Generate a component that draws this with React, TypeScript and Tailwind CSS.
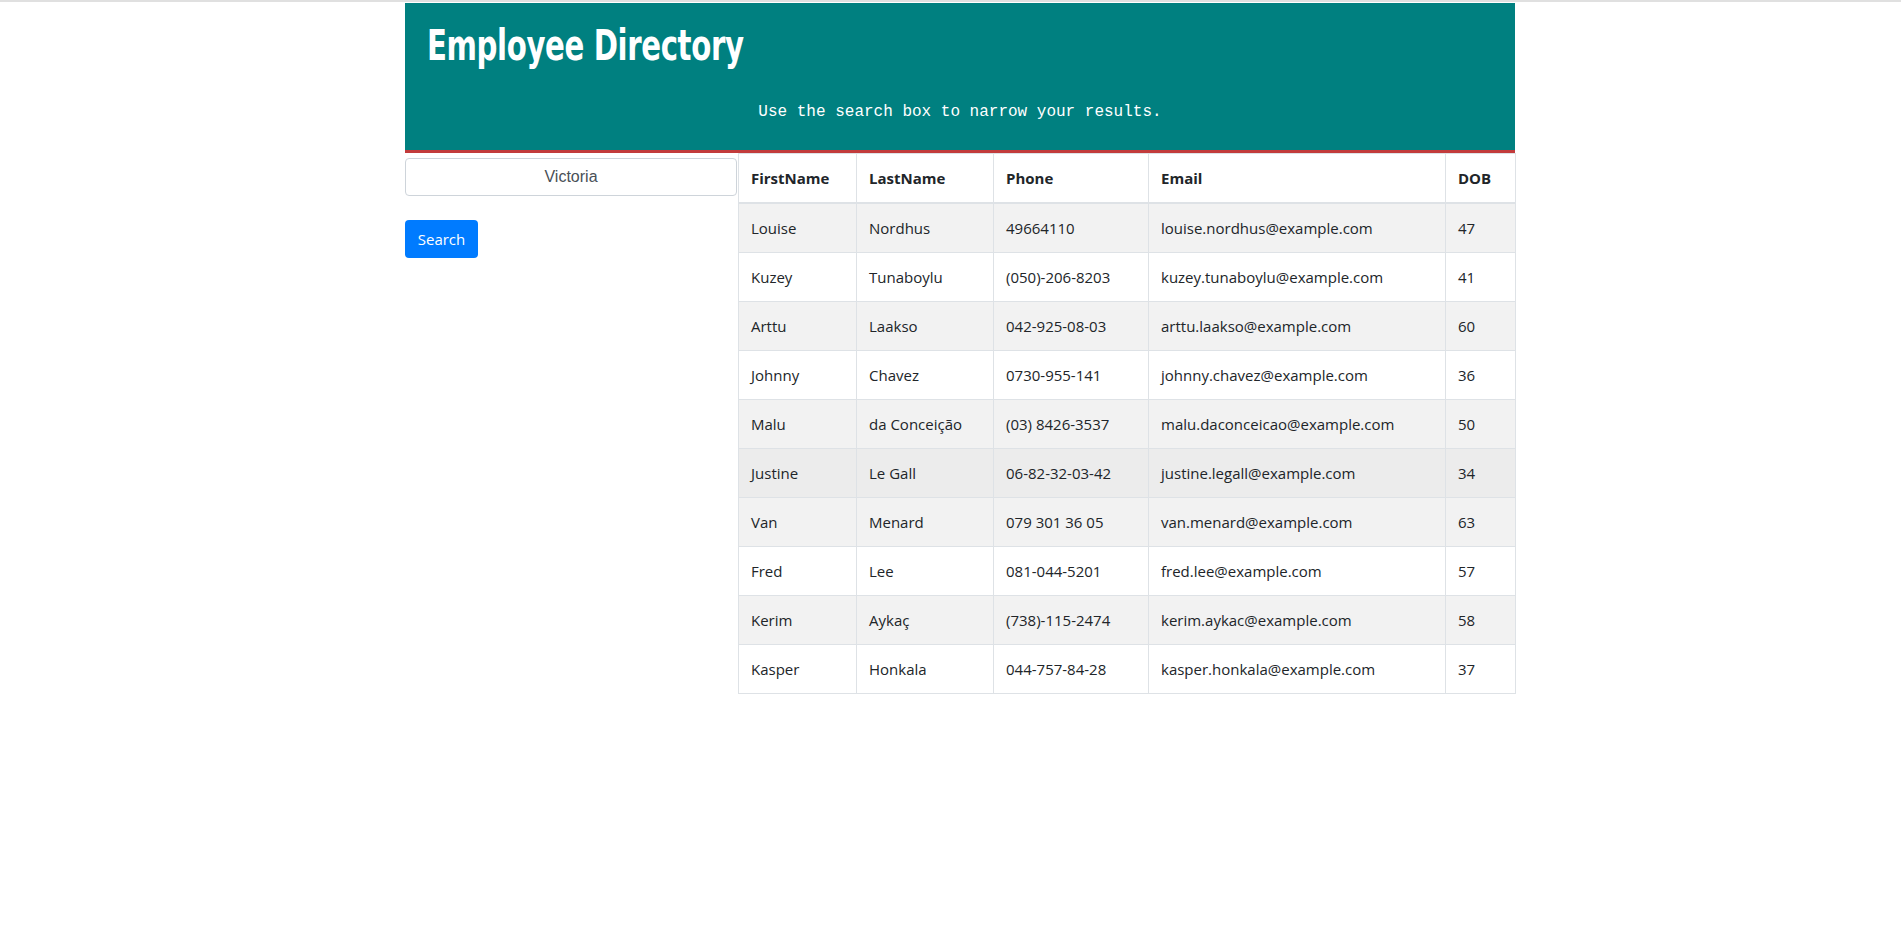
import React from "react";

const rows = [
  ["Louise", "Nordhus", "49664110", "louise.nordhus@example.com", "47"],
  ["Kuzey", "Tunaboylu", "(050)-206-8203", "kuzey.tunaboylu@example.com", "41"],
  ["Arttu", "Laakso", "042-925-08-03", "arttu.laakso@example.com", "60"],
  ["Johnny", "Chavez", "0730-955-141", "johnny.chavez@example.com", "36"],
  ["Malu", "da Conceição", "(03) 8426-3537", "malu.daconceicao@example.com", "50"],
  ["Justine", "Le Gall", "06-82-32-03-42", "justine.legall@example.com", "34"],
  ["Van", "Menard", "079 301 36 05", "van.menard@example.com", "63"],
  ["Fred", "Lee", "081-044-5201", "fred.lee@example.com", "57"],
  ["Kerim", "Aykaç", "(738)-115-2474", "kerim.aykac@example.com", "58"],
  ["Kasper", "Honkala", "044-757-84-28", "kasper.honkala@example.com", "37"],
];

const headers = ["FirstName", "LastName", "Phone", "Email", "DOB"];
const widths = ["w-[118px]", "w-[137px]", "w-[155px]", "w-[297px]", "w-[70px]"];

export default function App() {
  return (
    <div className="min-h-[929px] bg-white font-['Segoe_UI','Open_Sans',sans-serif] text-[#212529]">
      <div className="h-[2px] bg-[#e0e0e0]" />
      <div className="ml-[405px] mt-[1px] w-[1110px]">
        <header className="h-[150px] border-b-[3px] border-[#c23b3b] bg-[#008080] flex flex-col">
          <h1 className="origin-left scale-x-[0.755] pl-[29px] pt-[18px] text-[43px] leading-[48px] text-white font-['Impact','DejaVu_Sans_Condensed','DejaVu_Sans',sans-serif] font-bold tracking-[-0.5px] whitespace-nowrap">
            Employee Directory
          </h1>
          <p className="mt-[31px] text-center text-[16px] leading-[24px] text-white font-['Liberation_Mono','Courier_New',monospace]">
            Use the search box to narrow your results.
          </p>
        </header>
        <div className="flex">
          <div className="w-[333px] shrink-0 pt-[5px]">
            <input
              readOnly
              value="Victoria"
              className="block h-[38px] w-[332px] rounded-[4px] border border-[#ced4da] bg-white px-3 text-center text-[16px] text-[#495057] font-['Liberation_Sans',Arial,sans-serif] outline-none"
            />
            <button className="mt-[24px] h-[38px] w-[73px] rounded-[4px] bg-[#007bff] text-[15px] leading-[24px] text-white">
              Search
            </button>
          </div>
          <table className="w-[777px] table-fixed border-collapse text-[15px] leading-[24px]">
            <thead>
              <tr>
                {headers.map((h, i) => (
                  <th
                    key={h}
                    className={`${widths[i]} border border-b-2 border-[#dee2e6] px-[12px] py-[12px] text-left font-bold`}
                  >
                    {h}
                  </th>
                ))}
              </tr>
            </thead>
            <tbody>
              {rows.map((r, ri) => (
                <tr
                  key={ri}
                  className={
                    ri === 5
                      ? "bg-[#ececec]"
                      : ri % 2 === 0
                      ? "bg-[#f2f2f2]"
                      : "bg-white"
                  }
                >
                  {r.map((c, ci) => (
                    <td
                      key={ci}
                      className="border border-[#dee2e6] px-[12px] py-[12px] whitespace-nowrap"
                    >
                      {c}
                    </td>
                  ))}
                </tr>
              ))}
            </tbody>
          </table>
        </div>
      </div>
    </div>
  );
}
